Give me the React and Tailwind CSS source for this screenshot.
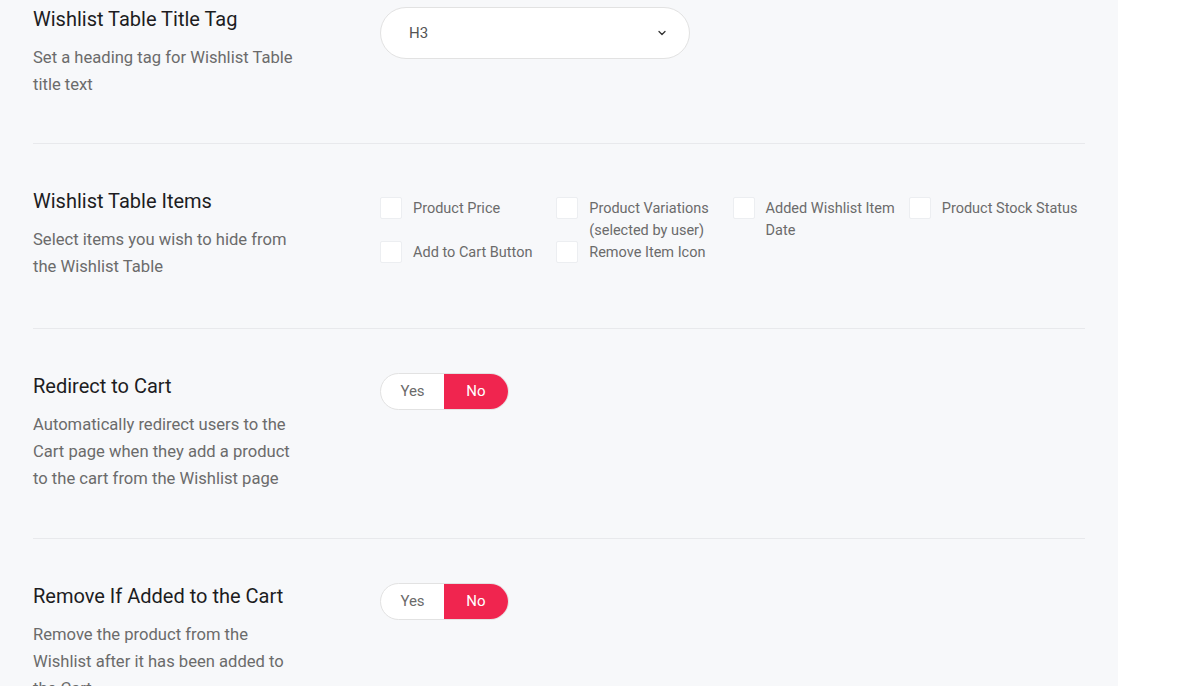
import React, { useState } from 'react';

const font = { fontFamily: 'Roboto, "Noto Sans", sans-serif' };

const tableItems = [
  'Product Price',
  'Product Variations (selected by user)',
  'Added Wishlist Item Date',
  'Product Stock Status',
  'Add to Cart Button',
  'Remove Item Icon',
];

const Section = ({ title, desc, children, top = 'pt-[43px]', bottom, last }) => (
  <div className={'flex items-start ' + top + ' ' + bottom + (last ? '' : ' border-b border-[#e8e9ec]')}>
    <div className="w-[347px] shrink-0">
      <h3 className="text-[20px] leading-[28px] text-[#1d1d1f] font-normal">{title}</h3>
      <p className="mt-[11px] w-[268px] text-[16.6px] leading-[27px] text-[#6b6b6b]">{desc}</p>
    </div>
    <div className="flex-1">{children}</div>
  </div>
);

const Toggle = ({ value, onChange }) => (
  <div className="mt-[1px] flex h-[37px] w-[129px] overflow-hidden rounded-full border border-[#e2e2e2] bg-white text-[15px]">
    <button
      onClick={() => onChange('yes')}
      className={'w-[63px] h-full ' + (value === 'yes' ? 'bg-[#f0254f] text-white' : 'text-[#6b6b6b]')}
    >
      Yes
    </button>
    <button
      onClick={() => onChange('no')}
      className={'flex-1 h-full ' + (value === 'no' ? 'bg-[#f0254f] text-white' : 'text-[#6b6b6b]')}
    >
      No
    </button>
  </div>
);

export default function App() {
  const [redirect, setRedirect] = useState('no');
  const [remove, setRemove] = useState('no');
  const [checked, setChecked] = useState({});

  return (
    <div className="flex h-[686px] overflow-hidden bg-white" style={font}>
      <div className="w-[1118px] shrink-0 bg-[#f7f8fa] px-[33px]">
        <Section
          top="pt-[5px]"
          bottom="pb-[45px]"
          title="Wishlist Table Title Tag"
          desc="Set a heading tag for Wishlist Table title text"
        >
          {/* Select */}
          <div className="mt-[2px] flex h-[52px] w-[310px] items-center justify-between rounded-full border border-[#e2e2e2] bg-white pl-[28px] pr-[22px]">
            <span className="text-[15px] text-[#555]">H3</span>
            <svg width="10" height="10" viewBox="0 0 10 10" fill="none">
              <path d="M2 3.5L5 6.5L8 3.5" stroke="#333" strokeWidth="1.3" strokeLinecap="round" strokeLinejoin="round" />
            </svg>
          </div>
        </Section>

        <Section
          bottom="pb-[48px]"
          title="Wishlist Table Items"
          desc="Select items you wish to hide from the Wishlist Table"
        >
          <div className="mt-[10px] grid grid-cols-4">
            {tableItems.map((item) => (
              <label key={item} className="flex items-start gap-[11px] cursor-pointer">
                <span
                  onClick={() => setChecked((p) => ({ ...p, [item]: !p[item] }))}
                  className={
                    'h-[22px] w-[22px] shrink-0 rounded-[2px] border border-[#eceef1] ' +
                    (checked[item] ? 'bg-[#f0254f]' : 'bg-white')
                  }
                />
                <span className="relative top-[1px] text-[14.5px] leading-[22px] text-[#6b6b6b]">{item}</span>
              </label>
            ))}
          </div>
        </Section>

        <Section
          bottom="pb-[46px]"
          title="Redirect to Cart"
          desc="Automatically redirect users to the Cart page when they add a product to the cart from the Wishlist page"
        >
          <Toggle value={redirect} onChange={setRedirect} />
        </Section>

        <Section
          last
          bottom="pb-[46px]"
          title="Remove If Added to the Cart"
          desc="Remove the product from the Wishlist after it has been added to the Cart"
        >
          <Toggle value={remove} onChange={setRemove} />
        </Section>
      </div>
      <div className="flex-1 bg-white" />
    </div>
  );
}
